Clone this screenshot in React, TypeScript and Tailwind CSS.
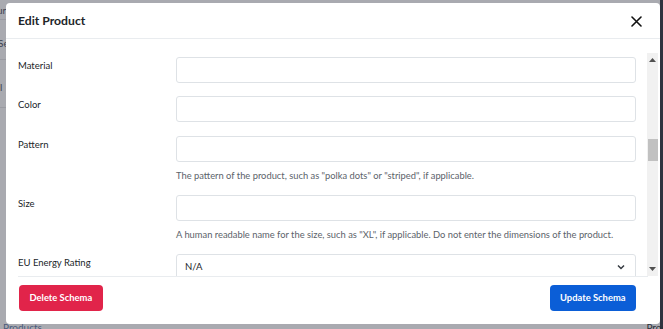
import React from "react";

const font = { fontFamily: 'Lato, "Noto Sans", sans-serif' };

function Row({ label, help, gap = "mb-[13px]", children }: { label: string; help?: string; gap?: string; children?: React.ReactNode }) {
  return (
    <div className={`flex ${gap}`}>
      <div className="w-[158px] shrink-0 pt-[1px] text-[9.5px] leading-[16px] text-[#212529]">{label}</div>
      <div className="flex-1">
        {children ?? <div className="h-[26px] rounded-[3px] border border-[#dee2e6] bg-white" />}
        {help && <div className="mt-[7px] text-[9.35px] leading-[14px] text-[#5c636a] whitespace-nowrap">{help}</div>}
      </div>
    </div>
  );
}

export default function App() {
  return (
    <div className="relative w-[663px] h-[329px] overflow-hidden bg-[#a9aab0]" style={font}>
      {/* backdrop page hints */}
      <div className="absolute left-0 top-0 w-[6px] h-[329px] flex flex-col text-[10px] text-[#3d4250]">
        <div className="h-[20px] border-b border-[#9a9ba2] leading-[20px] -ml-[3px]">ur</div>
        <div className="h-[40px] border-b border-[#9a9ba2] pt-[16px] -ml-[2px]">Se</div>
        <div className="h-[48px] border-b border-[#9a9ba2] pt-[20px]">l</div>
      </div>
      <div className="absolute right-0 top-0 w-[3px] h-[329px] bg-[#2f3440]" />
      <div className="absolute left-[3px] bottom-[-6px] text-[10px] text-[#4b5b7c]">Products</div>
      <div className="absolute right-[-4px] bottom-[-6px] text-[10px] text-[#2b2f38]">Prod</div>

      {/* modal */}
      <div className="absolute left-[6px] top-[3px] w-[654px] h-[321px] bg-white rounded-[4px] flex flex-col">
        <div className="h-[36px] shrink-0 px-3 flex items-center justify-between border-b border-[#e9ecef]">
          <div className="text-[12.2px] font-bold text-[#212529] pt-[2px]">Edit Product</div>
          <svg width="11" height="11" viewBox="0 0 11 11" className="mr-[6px] mt-[1px]">
            <path d="M1 1 L10 10 M10 1 L1 10" stroke="#111" strokeWidth="1.6" strokeLinecap="round" />
          </svg>
        </div>
        <div className="flex-1 flex overflow-hidden">
          <div className="flex-1 overflow-hidden pl-3 pr-[11px] pt-[18px]">
            <Row label="Material" />
            <Row label="Color" gap="mb-[14px]" />
            <Row label="Pattern" gap="mb-[12px]" help={'The pattern of the product, such as "polka dots" or "striped", if applicable.'} />
            <Row label="Size" gap="mb-[12px]" help={'A human readable name for the size, such as "XL", if applicable. Do not enter the dimensions of the product.'} />
            <Row label="EU Energy Rating">
              <div className="h-[26px] rounded-[3px] border border-[#dee2e6] bg-white flex items-center justify-between pl-[8px] pr-[10px]">
                <span className="text-[9.5px] text-[#212529]">N/A</span>
                <svg width="8" height="6" viewBox="0 0 8 6">
                  <path d="M1 1.5 L4 4.5 L7 1.5" stroke="#343a40" strokeWidth="1.5" fill="none" />
                </svg>
              </div>
            </Row>
          </div>
          <div className="w-[11px] shrink-0 mt-[14px] bg-[#f1f1f1] flex flex-col items-center">
            <svg width="7" height="4" viewBox="0 0 7 4" className="mt-[5px]">
              <path d="M0 4 L3.5 0 L7 4 Z" fill="#505050" />
            </svg>
            <div className="w-[10px] h-[22px] bg-[#c1c1c1] mt-[77px]" />
            <div className="flex-1" />
            <svg width="7" height="4" viewBox="0 0 7 4" className="mb-[5px]">
              <path d="M0 0 L3.5 4 L7 0 Z" fill="#505050" />
            </svg>
          </div>
          <div className="w-[2px] shrink-0" />
        </div>
        <div className="mx-3 border-t border-[#e9ecef]" />
        <div className="shrink-0 flex items-start justify-between pl-[1px] pr-[12px] pt-[8px] pb-[13px] mx-3">
          <div className="h-[26px] px-[10.5px] rounded-[4px] bg-[#e1244a] text-white text-[9.4px] font-bold flex items-center">Delete Schema</div>
          <div className="h-[26px] px-[10.5px] rounded-[4px] bg-[#0b5ed7] text-white text-[9.4px] font-bold flex items-center">Update Schema</div>
        </div>
      </div>
    </div>
  );
}
